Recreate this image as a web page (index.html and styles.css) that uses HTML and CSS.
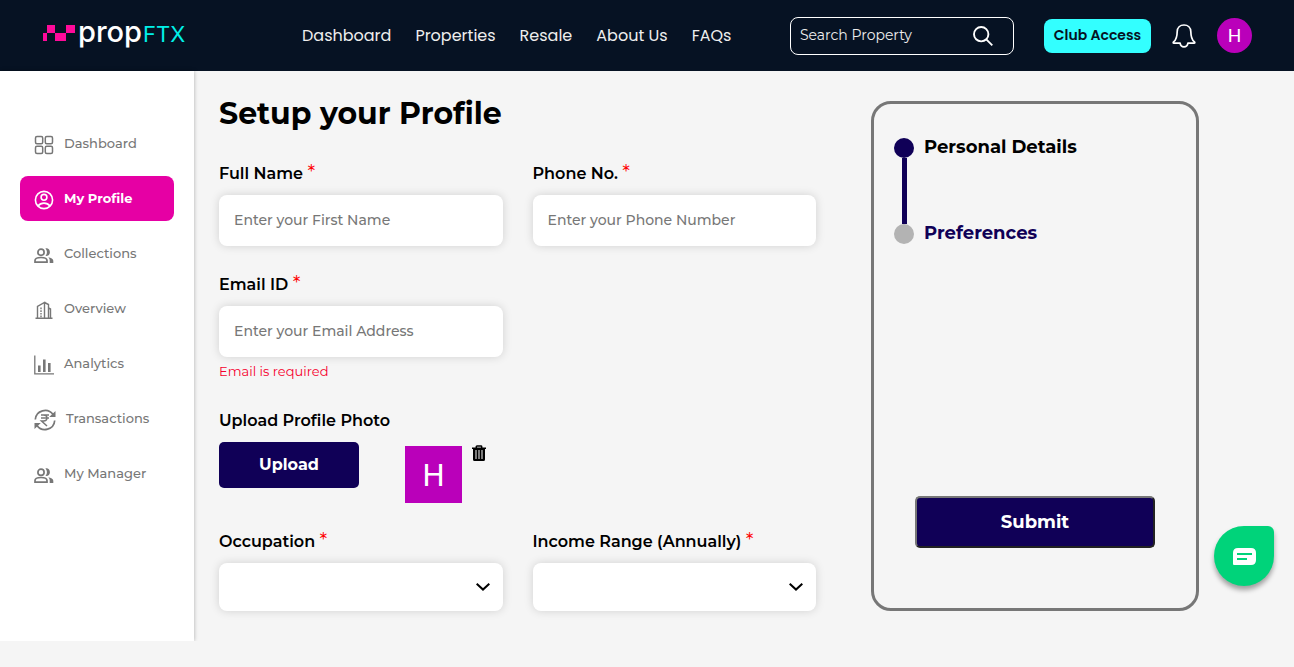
FILE: index.html
```html
<!DOCTYPE html>
<html lang="en">
<head>
<meta charset="utf-8">
<meta name="viewport" content="width=device-width, initial-scale=1">
<title>propFTX - Setup your Profile</title>
<link rel="stylesheet" href="styles.css">
</head>
<body>
<svg class="sprite" aria-hidden="true">
  <symbol id="people" viewBox="0 0 20 16">
    <g fill="none" stroke="currentColor" stroke-width="1.7">
      <circle cx="7" cy="4.2" r="3.1"/>
      <path d="M1 14.2v-1.7c0-2 3.200-3 6-3s6 1 6 3v1.700z"/>
    </g>
    <path fill="currentColor" d="M11.400 7.800c1-1 1.500-2.200 1.500-3.600S12.400 1.500 11.400.5c2.400-.7 4.500 1.200 4.500 3.700s-2.100 4.300-4.500 3.600zM14.300 9.200c2.600.4 5 1.500 5 3.600V15h-3.600v-2.500c0-1.400-.5-2.400-1.400-3.300z"/>
  </symbol>
</svg>

<header class="topbar">
  <a class="logo" href="#" aria-label="propFTX home">
    <svg class="logo-mark" viewBox="0 0 32 16" shape-rendering="crispEdges"><path fill="#ff0a9a" d="M4 0h8v8H4zM23 0h9v8h-9zM0 8h4v8H0zM12 8h11v8H12z"/></svg>
    <span class="logo-prop">prop</span><span class="logo-ftx">FTX</span>
  </a>
  <nav class="topnav">
    <a href="#">Dashboard</a>
    <a href="#">Properties</a>
    <a href="#">Resale</a>
    <a href="#">About Us</a>
    <a href="#">FAQs</a>
  </nav>
  <div class="actions">
    <form class="search">
      <input class="search-input" type="search" placeholder="Search Property" aria-label="Search Property">
      <button class="icon-button" type="button" aria-label="Search">
        <svg class="search-icon" viewBox="0 0 20 20" fill="none" stroke="currentColor" stroke-width="1.9"><circle cx="8.200" cy="8.200" r="7.200"/><path d="M13.300 13.300l6 6"/></svg>
      </button>
    </form>
    <button class="club" type="button">Club Access</button>
    <button class="icon-button bell" type="button" aria-label="Notifications">
      <svg class="bell-icon" viewBox="0 0 24 24" fill="none" stroke="currentColor" stroke-width="1.700" stroke-linejoin="round"><path d="M12 1C8 1 5.300 3.700 5.200 7.500c-.1 5.500-.6 8-3.400 10.100-.8.600-.9 1.600.2 1.600h6.100c.3 2.200 1.700 3.700 3.900 3.700s3.600-1.500 3.900-3.700H22c1.100 0 1-1 .2-1.600-2.800-2.100-3.300-4.600-3.400-10.100C18.700 3.700 16 1 12 1z"/></svg>
    </button>
    <button class="avatar" type="button" aria-label="Account">H</button>
  </div>
</header>

<div class="page">
  <nav class="sidebar">
    <a class="side-link" href="#">
      <svg class="side-icon" viewBox="0 0 20 20" fill="none" stroke="currentColor" stroke-width="1.500"><rect x="1.500" y="1.500" width="7.200" height="7.200" rx="1.500"/><rect x="11.300" y="1.500" width="7.200" height="7.200" rx="1.500"/><rect x="1.500" y="11.300" width="7.200" height="7.200" rx="1.500"/><rect x="11.300" y="11.300" width="7.200" height="7.200" rx="1.500"/></svg>
      <span class="side-text">Dashboard</span>
    </a>
    <a class="side-link active" href="#" aria-current="page">
      <svg class="side-icon" viewBox="0 0 20 20" fill="none" stroke="currentColor" stroke-width="1.600"><circle cx="10" cy="10" r="8.600"/><circle cx="10" cy="7.300" r="2.900"/><path d="M4 16.100c1.500-2 3.500-3 6-3s4.500 1 6 3"/></svg>
      <span class="side-text">My Profile</span>
    </a>
    <a class="side-link" href="#">
      <svg class="side-icon"><use href="#people" y="3" width="20" height="16"/></svg>
      <span class="side-text">Collections</span>
    </a>
    <a class="side-link" href="#">
      <svg class="side-icon" viewBox="0 0 20 20" fill="none" stroke="currentColor" stroke-width="1.400"><path d="M1.500 18.200h17M3.500 18V6.500l7-4V18M10.500 2.500l4 2v13.500M14.500 8l2 1V18"/><path stroke-dasharray="1.700 1" d="M7 7.500V18"/></svg>
      <span class="side-text">Overview</span>
    </a>
    <a class="side-link" href="#">
      <svg class="side-icon" viewBox="0 0 20 20" fill="none" stroke="currentColor"><path stroke-width="1.300" d="M.8.500v18.300H20"/><path stroke-width="2.600" d="M5.300 17v-6.500M10.300 17V4.500M15.300 17V8"/></svg>
      <span class="side-text">Analytics</span>
    </a>
    <a class="side-link" href="#">
      <svg class="side-icon wide" viewBox="0 0 22 22" fill="none" stroke="currentColor" stroke-width="1.700"><path d="M1.300 10.500A9.800 9.800 0 0 1 19 5.500M20.700 11.500A9.800 9.800 0 0 1 3 16.500"/><path fill="currentColor" stroke="none" d="M21.500 2v6h-6.300zM.5 20v-6h6.300z"/><path stroke-width="1.500" d="M7 6h8M7 9h8M9.500 6c4.500 0 4.500 6 0 6H7.500l5.500 5"/></svg>
      <span class="side-text">Transactions</span>
    </a>
    <a class="side-link" href="#">
      <svg class="side-icon"><use href="#people" y="3" width="20" height="16"/></svg>
      <span class="side-text">My Manager</span>
    </a>
  </nav>

  <main class="content">
    <form class="profile" id="profile">
      <h1 class="title">Setup your Profile</h1>
      <div class="fields">
        <div class="field">
          <label class="label" for="name">Full Name <span class="star">*</span></label>
          <input class="control" id="name" type="text" placeholder="Enter your First Name">
        </div>
        <div class="field">
          <label class="label" for="phone">Phone No. <span class="star">*</span></label>
          <input class="control" id="phone" type="tel" placeholder="Enter your Phone Number">
        </div>
        <div class="field first-column">
          <label class="label" for="email">Email ID <span class="star">*</span></label>
          <input class="control" id="email" type="email" placeholder="Enter your Email Address" aria-describedby="email-error">
          <p class="error" id="email-error">Email is required</p>
        </div>
        <div class="field first-column">
          <span class="label">Upload Profile Photo</span>
          <div class="upload-row">
            <button class="upload" type="button">Upload</button>
            <div class="photo">H</div>
            <button class="icon-button trash" type="button" aria-label="Delete photo">
              <svg class="trash-icon" viewBox="0 0 14 16"><path fill="none" stroke="currentColor" stroke-width="1.500" d="M4.300 3V1.700Q4.300 1 5 1h4q.7 0 .7.700V3"/><path fill="currentColor" fill-rule="evenodd" d="M0 2.500h14V4h-1v10.500q0 1.500-1.500 1.500h-9Q1 16 1 14.500V4H0zM3.500 5v9h1V5zM6.500 5v9h1V5zM9.500 5v9h1V5z"/></svg>
            </button>
          </div>
        </div>
        <div class="field first-column">
          <label class="label" for="occupation">Occupation <span class="star">*</span></label>
          <div class="select">
            <select class="control" id="occupation"><option></option></select>
            <svg class="chevron" viewBox="0 0 14 8" fill="none" stroke="currentColor" stroke-width="2"><path d="M.7.800L7 6.600 13.300.8"/></svg>
          </div>
        </div>
        <div class="field">
          <label class="label" for="income">Income Range (Annually) <span class="star">*</span></label>
          <div class="select">
            <select class="control" id="income"><option></option></select>
            <svg class="chevron" viewBox="0 0 14 8" fill="none" stroke="currentColor" stroke-width="2"><path d="M.7.800L7 6.600 13.300.8"/></svg>
          </div>
        </div>
      </div>
    </form>

    <aside class="progress">
      <ol class="steps">
        <li class="step done">Personal Details</li>
        <li class="step">Preferences</li>
      </ol>
      <button class="submit" type="submit" form="profile">Submit</button>
    </aside>
  </main>
</div>

<button class="chat" type="button" aria-label="Open chat">
  <svg class="chat-icon" viewBox="0 0 23 17"><path fill="#fff" d="M5 0h13q5 0 5 5v7q0 5-5 5H1q-1 0-1-1V5q0-5 5-5z"/><path stroke="#00d37a" stroke-width="2" d="M4 6h15M4 11h10"/></svg>
</button>
</body>
</html>
```

FILE: styles.css
```css
* {
  box-sizing: border-box;
}

body {
  margin: 0;
  background: #f5f5f5;
  color: #000;
  font-family: Montserrat, Inter, "Open Sans", sans-serif;
}

a {
  color: inherit;
  text-decoration: none;
}

button,
input,
select {
  font: inherit;
}

svg {
  display: block;
  flex: none;
}

.sprite {
  display: none;
}

.icon-button {
  padding: 0;
  border: 0;
  background: none;
  color: inherit;
}

/* Header */

.topbar {
  display: flex;
  align-items: center;
  height: 71px;
  padding: 0 42px;
  background: #061223;
  color: #fff;
}

.logo {
  display: flex;
  align-items: baseline;
  width: 145px;
  padding-bottom: 6px;
  font-family: Inter, sans-serif;
  line-height: 40px;
}

.logo-mark {
  align-self: center;
  width: 32px;
  height: 16px;
  margin: 0 3px 0 1px;
}

.logo-prop {
  font-size: 29px;
  font-weight: 500;
}

.logo-ftx {
  margin-left: 1px;
  color: #00f0e8;
  font-size: 22px;
}

.topnav {
  display: flex;
  gap: 24px;
  margin: 0 24px 0 115px;
  color: #eee;
  font-family: Poppins, Inter, sans-serif;
  font-size: 16px;
  line-height: 24px;
  white-space: nowrap;
}

.actions {
  display: flex;
  align-items: center;
  height: 35px;
  margin-left: auto;
}

.search {
  display: flex;
  align-items: center;
  justify-content: space-between;
  width: 224px;
  height: 38px;
  padding: 0 20px 0 9px;
  border: 1px solid #fff;
  border-radius: 8px;
}

.search-input {
  width: 150px;
  padding: 0 0 1px;
  border: 0;
  outline: 0;
  background: none;
  color: #fff;
  font-size: 14px;
}

.search-input::placeholder {
  color: #eee;
  opacity: 1;
}

.search-icon {
  width: 20px;
  height: 20px;
}

.club {
  width: 107px;
  height: 34px;
  margin-left: 30px;
  padding: 0;
  border: 0;
  border-radius: 8px;
  background: #33ffff;
  color: #061223;
  font-family: Poppins, Inter, sans-serif;
  font-size: 14px;
  font-weight: 600;
  white-space: nowrap;
}

.bell {
  margin: 0 21px;
}

.bell-icon {
  width: 24px;
  height: 24px;
}

.avatar {
  width: 35px;
  height: 35px;
  padding: 0;
  border: 0;
  border-radius: 50%;
  background: #ba00ba;
  color: #fff;
  font-family: Roboto, sans-serif;
  font-size: 19px;
}

/* Sidebar */

.page {
  display: flex;
  align-items: flex-start;
}

.sidebar {
  display: flex;
  flex: none;
  flex-direction: column;
  gap: 10px;
  width: 194px;
  min-height: 570px;
  padding: 50px 20px;
  background: #fff;
  box-shadow: 0 0 4px rgba(0, 0, 0, 0.3);
}

.side-link {
  display: flex;
  align-items: center;
  gap: 10px;
  height: 45px;
  padding: 2px 0 0 14px;
  border-radius: 8px;
  color: #777;
  font-size: 13px;
  font-weight: 500;
}

.side-text {
  padding-bottom: 3px;
}

.side-link.active {
  background: #e600a4;
  color: #fff;
  font-weight: 700;
}

.side-icon {
  width: 20px;
  height: 20px;
}

.side-icon.wide {
  width: 22px;
  height: 22px;
}

/* Profile form */

.content {
  display: flex;
  flex: 1;
  gap: 55px;
  min-width: 0;
  padding: 23px 95px 30px 25px;
}

.profile {
  flex: 1;
  min-width: 0;
}

.title {
  margin: 0 0 28px;
  font-size: 30px;
  font-weight: 700;
  line-height: 40px;
}

.fields {
  display: grid;
  grid-template-columns: 1fr 1fr;
  gap: 27px 30px;
}

.first-column {
  grid-column-start: 1;
}

.label {
  display: block;
  height: 24px;
  margin-bottom: 9px;
  font-size: 16px;
  font-weight: 600;
  line-height: 24px;
  white-space: nowrap;
}

.star {
  color: #f00;
  font-size: 20px;
  font-weight: 400;
  line-height: 20px;
}

.control {
  display: block;
  width: 100%;
  height: 51px;
  padding: 0 15px 2px;
  border: 0;
  border-radius: 8px;
  background: #fff;
  box-shadow: 0 0 10px rgba(0, 0, 0, 0.15);
  color: #222;
  font-size: 14px;
  font-weight: 500;
}

.control::placeholder {
  color: #777;
  opacity: 1;
}

.error {
  margin: 4px 0 0;
  padding-bottom: 1px;
  color: #f5002d;
  font-size: 13px;
  line-height: 20px;
}

.upload-row {
  display: flex;
  align-items: flex-start;
}

.upload {
  width: 140px;
  height: 46px;
  padding: 0 0 2px;
  border: 0;
  border-radius: 5px;
  background: #100057;
  color: #fff;
  font-size: 16px;
  font-weight: 700;
}

.photo {
  width: 57px;
  height: 57px;
  margin: 4px 10px 0 46px;
  background: #ba00ba;
  color: #fff;
  font-family: Roboto, sans-serif;
  font-size: 31px;
  line-height: 59px;
  text-align: center;
}

.trash {
  margin-top: 3px;
}

.trash-icon {
  width: 14px;
  height: 16px;
}

.select {
  display: grid;
  align-items: center;
}

.select .control,
.chevron {
  grid-area: 1 / 1;
}

.select .control {
  height: 48px;
  appearance: none;
}

.chevron {
  justify-self: end;
  width: 14px;
  height: 8px;
  margin-right: 13px;
  pointer-events: none;
}

/* Progress card */

.progress {
  display: flex;
  flex: none;
  flex-direction: column;
  align-items: center;
  justify-content: space-between;
  align-self: flex-start;
  width: 328px;
  min-height: 510px;
  margin-top: 7px;
  padding: 34px 20px 60px;
  border: 3px solid #777;
  border-radius: 20px;
}

.steps {
  align-self: stretch;
  margin: 0;
  padding: 0;
  list-style: none;
}

.step {
  display: grid;
  grid-template-columns: 20px 1fr;
  column-gap: 10px;
  color: #100057;
  font-size: 18px;
  font-weight: 700;
  line-height: 18px;
}

.step::before {
  width: 20px;
  height: 20px;
  border-radius: 50%;
  background: #b3b3b3;
  content: "";
}

.step.done {
  color: #000;
}

.step.done::before {
  background: #100057;
}

.step.done::after {
  justify-self: center;
  width: 5px;
  height: 66px;
  background: #100057;
  content: "";
}

.submit {
  width: 240px;
  height: 52px;
  border: 2px solid;
  border-color: #777 #222 #222 #777;
  border-radius: 5px;
  background: #100057;
  color: #fff;
  font-size: 18px;
  font-weight: 700;
}

/* Chat launcher */

.chat {
  display: grid;
  place-items: center;
  position: fixed;
  right: 20px;
  bottom: 81px;
  width: 60px;
  height: 60px;
  padding: 0;
  border: 0;
  border-radius: 30px 6px 30px 30px;
  background: #00d37a;
  box-shadow: 0 4px 5px rgba(0, 0, 0, 0.35);
}

.chat-icon {
  width: 23px;
  height: 17px;
}
```
